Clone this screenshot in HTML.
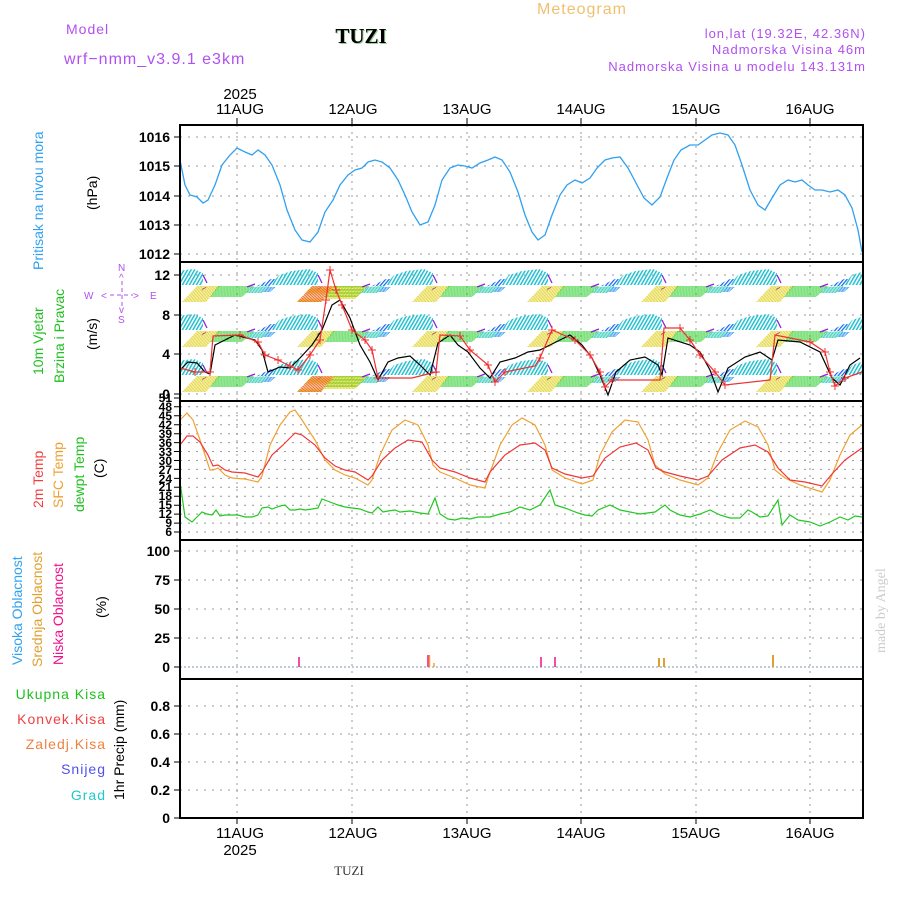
<!DOCTYPE html>
<html><head><meta charset="utf-8"><style>
html,body{margin:0;padding:0;background:#fff;width:900px;height:900px;overflow:hidden}
svg{display:block;font-family:"Liberation Sans",sans-serif}
</style></head><body>
<svg width="900" height="900" viewBox="0 0 900 900" xmlns="http://www.w3.org/2000/svg" xmlns:xlink="http://www.w3.org/1999/xlink">
<defs>
<pattern id="sy" width="3" height="3" patternUnits="userSpaceOnUse" patternTransform="skewX(-65)"><rect width="1.7" height="3" fill="#e0d020"/></pattern>
<pattern id="so" width="3" height="3" patternUnits="userSpaceOnUse" patternTransform="skewX(-62)"><rect width="1.7" height="3" fill="#f06030"/></pattern>
<pattern id="sg" width="3" height="3" patternUnits="userSpaceOnUse" patternTransform="skewX(-72)"><rect width="1.7" height="3" fill="#30d030"/></pattern>
<pattern id="sc" width="3" height="3" patternUnits="userSpaceOnUse" patternTransform="skewX(-75)"><rect width="1.7" height="3" fill="#20c8b0"/></pattern>
<pattern id="sb" width="3" height="3" patternUnits="userSpaceOnUse" patternTransform="skewX(-75)"><rect width="1.7" height="3" fill="#2090f0"/></pattern>
<pattern id="nc" width="3.5" height="3" patternUnits="userSpaceOnUse" patternTransform="skewX(-30)"><rect width="1.7" height="3" fill="#20c0d0"/></pattern>
<pattern id="nb" width="3.5" height="3" patternUnits="userSpaceOnUse" patternTransform="skewX(-40)"><rect width="1.7" height="3" fill="#2070f0"/></pattern>
<g id="day">
<polygon points="34,0 42,-10 55,-14 72,-16 81,-12 81,0" fill="url(#nc)"/>
<polygon points="20,1 34,-6 38,-6 34,1" fill="url(#nb)"/>
<path d="M10 2l8-3M81 -10l4 8M84 2l-4 3" stroke="#9020e0" stroke-width="1.3" fill="none"/>
<polygon points="75,1 98,1 84,17 60,17" fill="url(#sy)"/>
<polygon points="96,1 132,1 120,12 88,12" fill="url(#sg)"/>
<polygon points="130,2 148,1 140,8 124,8" fill="url(#sc)"/>
<polygon points="146,2 154,2 148,7 140,7" fill="url(#sb)"/>
</g>
<g id="dayR">
<polygon points="75,1 98,1 84,17 60,17" fill="url(#so)"/>
<polygon points="96,1 130,1 118,14 86,14" fill="url(#sy)"/>
</g>
<clipPath id="wc"><rect x="181" y="263" width="681" height="137"/></clipPath>
</defs>
<rect width="900" height="900" fill="#fff"/>
<text x="582" y="14" font-size="16" fill="#f0c070" text-anchor="middle" letter-spacing="1">Meteogram</text>
<text x="66" y="34" font-size="14" fill="#b050f0" letter-spacing="1">Model</text>
<text x="64" y="64" font-size="16" fill="#b050f0" letter-spacing="1">wrf−nmm_v3.9.1  e3km</text>
<text x="362" y="44" font-size="21" font-weight="bold" font-family="Liberation Serif,serif" fill="#9c9" text-anchor="middle">TUZI</text>
<text x="361" y="43" font-size="21" font-weight="bold" font-family="Liberation Serif,serif" fill="#000" text-anchor="middle">TUZI</text>
<text x="866" y="38" font-size="13" fill="#b050f0" text-anchor="end" letter-spacing="1">lon,lat (19.32E, 42.36N)</text>
<text x="866" y="54" font-size="13" fill="#b050f0" text-anchor="end" letter-spacing="1">Nadmorska Visina 46m</text>
<text x="866" y="71" font-size="13" fill="#b050f0" text-anchor="end" letter-spacing="1">Nadmorska Visina u modelu 143.131m</text>
<g font-size="15" fill="#000" text-anchor="middle">
<text x="240" y="99">2025</text>
<text x="240" y="114">11AUG</text><text x="353" y="114">12AUG</text><text x="467" y="114">13AUG</text><text x="581" y="114">14AUG</text><text x="696" y="114">15AUG</text><text x="810" y="114">16AUG</text>
<text x="240" y="838">11AUG</text><text x="353" y="838">12AUG</text><text x="467" y="838">13AUG</text><text x="581" y="838">14AUG</text><text x="696" y="838">15AUG</text><text x="810" y="838">16AUG</text>
<text x="240" y="855">2025</text>
</g>
<text x="349" y="875" font-size="13" font-family="Liberation Serif,serif" fill="#333" text-anchor="middle">TUZI</text>
<g stroke="#999" stroke-dasharray="2,5" stroke-width="1">
<line x1="237" y1="125" x2="237" y2="818"/><line x1="352" y1="125" x2="352" y2="818"/><line x1="467" y1="125" x2="467" y2="818"/><line x1="581" y1="125" x2="581" y2="818"/><line x1="696" y1="125" x2="696" y2="818"/><line x1="810" y1="125" x2="810" y2="818"/>
</g>
<g stroke="#999" stroke-dasharray="2,6" stroke-width="1">
<line x1="180" y1="137" x2="863" y2="137"/><line x1="180" y1="166" x2="863" y2="166"/><line x1="180" y1="196" x2="863" y2="196"/><line x1="180" y1="225" x2="863" y2="225"/><line x1="180" y1="254" x2="863" y2="254"/>
<line x1="180" y1="275" x2="863" y2="275"/><line x1="180" y1="315" x2="863" y2="315"/><line x1="180" y1="354" x2="863" y2="354"/><line x1="180" y1="394" x2="863" y2="394"/>
<line x1="180" y1="406.8" x2="863" y2="406.8"/><line x1="180" y1="415.8" x2="863" y2="415.8"/><line x1="180" y1="424.7" x2="863" y2="424.7"/><line x1="180" y1="433.7" x2="863" y2="433.7"/><line x1="180" y1="442.6" x2="863" y2="442.6"/><line x1="180" y1="451.5" x2="863" y2="451.5"/><line x1="180" y1="460.5" x2="863" y2="460.5"/><line x1="180" y1="469.4" x2="863" y2="469.4"/><line x1="180" y1="478.4" x2="863" y2="478.4"/><line x1="180" y1="487.3" x2="863" y2="487.3"/><line x1="180" y1="496.2" x2="863" y2="496.2"/><line x1="180" y1="505.2" x2="863" y2="505.2"/><line x1="180" y1="514.1" x2="863" y2="514.1"/><line x1="180" y1="523.1" x2="863" y2="523.1"/><line x1="180" y1="532" x2="863" y2="532"/>
<line x1="180" y1="551" x2="863" y2="551"/><line x1="180" y1="580" x2="863" y2="580"/><line x1="180" y1="609" x2="863" y2="609"/><line x1="180" y1="638" x2="863" y2="638"/>
<line x1="180" y1="706" x2="863" y2="706"/><line x1="180" y1="734" x2="863" y2="734"/><line x1="180" y1="762" x2="863" y2="762"/><line x1="180" y1="790" x2="863" y2="790"/>
</g>
<g stroke="#000" stroke-width="1">
<path d="M174 137h6M174 166h6M174 196h6M174 225h6M174 254h6M174 275h6M174 315h6M174 354h6M174 394h6M174 551h6M174 580h6M174 609h6M174 638h6M174 667h6M174 706h6M174 734h6M174 762h6M174 790h6M174 818h6M174 398h6M174 406.8h6M174 415.8h6M174 424.7h6M174 433.7h6M174 442.6h6M174 451.5h6M174 460.5h6M174 469.4h6M174 478.4h6M174 487.3h6M174 496.2h6M174 505.2h6M174 514.1h6M174 523.1h6M174 532h6"/>
<path d="M237 118v7M352 118v7M467 118v7M581 118v7M696 118v7M810 118v7M237 818v6M352 818v6M467 818v6M581 818v6M696 818v6M810 818v6"/>
</g>
<g font-size="14" fill="#000" text-anchor="end" font-weight="bold">
<text x="170" y="142">1016</text><text x="170" y="171">1015</text><text x="170" y="201">1014</text><text x="170" y="230">1013</text><text x="170" y="259">1012</text>
<text x="170" y="280">12</text><text x="170" y="320">8</text><text x="170" y="359">4</text><text x="170" y="399">0</text>
<text x="170" y="556">100</text><text x="170" y="585">75</text><text x="170" y="614">50</text><text x="170" y="643">25</text><text x="170" y="672">0</text>
<text x="170" y="711">0.8</text><text x="170" y="739">0.6</text><text x="170" y="767">0.4</text><text x="170" y="795">0.2</text><text x="170" y="823">0</text>
</g>
<g font-size="12" fill="#000" text-anchor="end" font-weight="bold">
<text x="172" y="402">51</text><text x="172" y="411">48</text><text x="172" y="420">45</text><text x="172" y="429">42</text><text x="172" y="438">39</text><text x="172" y="447">36</text><text x="172" y="456">33</text><text x="172" y="465">30</text><text x="172" y="474">27</text><text x="172" y="483">24</text><text x="172" y="491">21</text><text x="172" y="500">18</text><text x="172" y="509">15</text><text x="172" y="518">12</text><text x="172" y="527">9</text><text x="172" y="536">6</text>
</g>
<g font-size="14">
<text transform="translate(43,270) rotate(-90)" fill="#30a0f0">Pritisak na nivou mora</text>
<text transform="translate(97,210) rotate(-90)" fill="#000">(hPa)</text>
<text transform="translate(43,375) rotate(-90)" fill="#20c020">10m Vjetar</text>
<text transform="translate(64,383) rotate(-90)" fill="#20c020">Brzina i Pravac</text>
<text transform="translate(97,350) rotate(-90)" fill="#000">(m/s)</text>
<text transform="translate(43,508) rotate(-90)" fill="#f04040">2m Temp</text>
<text transform="translate(63,508) rotate(-90)" fill="#f0a030">SFC Temp</text>
<text transform="translate(84,512) rotate(-90)" fill="#20c020">dewpt Temp</text>
<text transform="translate(104,478) rotate(-90)" fill="#000">(C)</text>
<text transform="translate(22,665) rotate(-90)" fill="#30a0f0">Visoka Oblacnost</text>
<text transform="translate(42,667) rotate(-90)" fill="#e0a030">Srednja Oblacnost</text>
<text transform="translate(63,665) rotate(-90)" fill="#f0108a">Niska Oblacnost</text>
<text transform="translate(106,618) rotate(-90)" fill="#000">(%)</text>
<text transform="translate(124,800) rotate(-90)" fill="#000">1hr Precip (mm)</text>
<text transform="translate(885,653) rotate(-90)" fill="#ccc" font-family="Liberation Serif,serif">made by Angel</text>
</g>
<g font-size="14" text-anchor="end" letter-spacing="1">
<text x="106" y="699" fill="#20c020">Ukupna  Kisa</text>
<text x="106" y="724" fill="#f04040">Konvek.Kisa</text>
<text x="106" y="749" fill="#f08040">Zaledj.Kisa</text>
<text x="106" y="774" fill="#5050f0">Snijeg</text>
<text x="106" y="800" fill="#20c8c8">Grad</text>
</g>
<g font-size="10" fill="#b050f0">
<text x="118" y="271">N</text><text x="118" y="323">S</text><text x="84" y="299">W</text><text x="150" y="299">E</text>
<text x="101" y="299">&lt;</text><text x="133" y="299">&gt;</text>
<text x="119" y="281">^</text><text x="119" y="313">v</text>
<line x1="110" y1="295" x2="133" y2="295" stroke="#b050f0" stroke-dasharray="4,3"/>
<line x1="122" y1="281" x2="122" y2="309" stroke="#b050f0" stroke-dasharray="4,3"/>
</g>
<polyline fill="none" stroke="#30a0f0" stroke-width="1.3" points="180,160 185,185 190,195 197,197 203,203 208,200 215,185 222,165 230,155 237,148 245,152 252,155 258,150 265,155 272,165 280,185 287,210 295,230 302,240 310,242 318,232 325,212 333,200 340,185 348,175 355,170 362,168 368,162 375,160 382,162 390,168 398,180 405,195 412,212 420,225 428,222 435,205 442,180 450,168 458,165 465,166 472,168 480,163 488,160 495,157 502,160 510,172 518,192 525,215 532,232 538,240 545,235 552,215 560,195 567,185 575,180 582,183 590,178 597,168 605,160 612,158 620,157 628,168 636,183 644,198 652,205 660,197 667,178 674,160 681,150 690,145 698,145 705,140 712,135 720,133 728,135 735,145 742,165 750,190 758,205 765,210 772,198 780,185 788,180 795,182 802,180 808,185 815,190 822,190 830,192 838,190 845,195 852,208 858,230 862,252"/>
<g clip-path="url(#wc)">
<use xlink:href="#day" href="#day" x="122" y="285"/><use xlink:href="#day" href="#day" x="122" y="330"/><use xlink:href="#day" href="#day" x="122" y="375"/>
<use xlink:href="#day" href="#day" x="237" y="285"/><use xlink:href="#day" href="#day" x="237" y="330"/><use xlink:href="#day" href="#day" x="237" y="375"/>
<use xlink:href="#dayR" href="#dayR" x="237" y="285"/><use xlink:href="#dayR" href="#dayR" x="237" y="375"/>
<use xlink:href="#day" href="#day" x="352" y="285"/><use xlink:href="#day" href="#day" x="352" y="330"/><use xlink:href="#day" href="#day" x="352" y="375"/>
<use xlink:href="#day" href="#day" x="467" y="285"/><use xlink:href="#day" href="#day" x="467" y="330"/><use xlink:href="#day" href="#day" x="467" y="375"/>
<use xlink:href="#day" href="#day" x="581" y="285"/><use xlink:href="#day" href="#day" x="581" y="330"/><use xlink:href="#day" href="#day" x="581" y="375"/>
<use xlink:href="#day" href="#day" x="696" y="285"/><use xlink:href="#day" href="#day" x="696" y="330"/><use xlink:href="#day" href="#day" x="696" y="375"/>
<use xlink:href="#day" href="#day" x="810" y="285"/><use xlink:href="#day" href="#day" x="810" y="330"/><use xlink:href="#day" href="#day" x="810" y="375"/>
</g>
<polyline fill="none" stroke="#000" stroke-width="1.2" points="180,370 188,362 197,363 205,372 210,374 215,345 235,335 255,340 262,350 268,372 280,367 290,368 300,358 312,345 322,330 332,305 340,300 350,318 360,345 370,362 378,380 388,362 398,358 410,356 420,365 430,375 438,343 450,335 458,345 468,352 480,368 490,378 500,362 515,358 528,352 540,350 550,345 560,340 570,335 582,345 592,358 600,375 608,395 616,372 630,360 645,357 658,365 662,375 668,338 690,345 700,352 710,370 718,392 728,368 745,357 760,352 772,360 778,340 800,342 820,352 832,378 840,385 850,365 860,358"/>
<polyline fill="none" stroke="#f03030" stroke-width="1.2" points="180,368 195,372 210,372 213,336 240,335 258,342 265,355 278,360 290,366 298,370 310,355 320,340 326,300 330,270 336,290 342,305 352,330 365,340 372,350 378,378 412,378 436,372 440,335 460,336 470,350 488,365 495,382 505,372 535,366 540,358 552,330 575,340 590,355 600,372 605,387 612,380 660,380 664,328 680,328 690,340 700,355 715,372 725,385 770,380 775,335 810,342 825,352 830,372 835,386 845,378 862,372"/>
<path stroke="#f03030" stroke-width="1" fill="none" d="M191 372h8M195 368v8M206 372h8M210 368v8M236 335h8M240 331v8M254 342h8M258 338v8M261 355h8M265 351v8M274 360h8M278 356v8M286 366h8M290 362v8M294 370h8M298 366v8M306 355h8M310 351v8M316 340h8M320 336v8M322 300h8M326 296v8M326 270h8M330 266v8M332 290h8M336 286v8M338 305h8M342 301v8M348 330h8M352 326v8M361 340h8M365 336v8M368 350h8M372 346v8M374 378h8M378 374v8M432 372h8M436 368v8M456 336h8M460 332v8M466 350h8M470 346v8M484 365h8M488 361v8M491 382h8M495 378v8M501 372h8M505 368v8M536 358h8M540 354v8M548 330h8M552 326v8M571 340h8M575 336v8M586 355h8M590 351v8M596 372h8M600 368v8M601 387h8M605 383v8M608 380h8M612 376v8M676 328h8M680 324v8M686 340h8M690 336v8M696 355h8M700 351v8M711 372h8M715 368v8M721 385h8M725 381v8M806 342h8M810 338v8M821 352h8M825 348v8M826 372h8M830 368v8M831 386h8M835 382v8M841 378h8M845 374v8"/>
<polyline fill="none" stroke="#f0a030" stroke-width="1.2" points="180,420 187,413 193,420 200,440 205,455 210,470 213,470 218,468 225,475 232,478 245,479 258,482 262,476 270,445 280,425 290,412 295,410 302,420 315,440 325,460 335,470 345,475 355,478 368,485 372,480 380,455 392,430 405,420 418,425 428,445 433,465 440,472 455,478 470,485 485,488 488,478 500,445 512,425 522,418 535,425 545,445 552,470 565,478 582,484 593,480 600,455 612,432 625,420 638,422 648,440 655,465 665,474 680,480 698,485 708,478 718,452 730,430 745,421 758,427 768,445 775,470 785,478 800,485 822,492 830,480 840,455 850,435 862,425"/>
<polyline fill="none" stroke="#f03838" stroke-width="1.2" points="180,445 187,436 193,436 200,442 208,455 213,466 218,465 225,470 232,472 245,473 258,477 262,472 272,455 283,445 295,433 302,435 315,445 325,458 335,466 345,470 355,472 368,480 372,476 382,460 395,448 408,440 422,442 432,460 440,468 455,472 470,478 485,482 490,472 505,455 520,445 535,443 545,450 552,468 565,474 582,478 593,476 605,458 620,447 636,443 648,450 656,468 665,472 680,476 698,480 708,476 722,460 740,448 755,445 768,452 778,468 790,480 805,482 822,486 832,474 845,460 862,448"/>
<polyline fill="none" stroke="#20c820" stroke-width="1.2" points="180,482 185,517 192,522 197,517 202,512 207,514 212,515 216,510 220,516 225,515 230,515 238,515 245,517 252,517 258,515 262,508 268,507 272,509 280,506 285,505 290,510 295,510 300,509 305,510 312,509 318,508 322,499 330,502 338,505 345,507 352,508 360,509 368,512 372,513 378,507 383,512 388,511 395,510 400,512 410,511 420,513 428,514 435,498 440,514 448,519 455,520 462,518 470,519 478,517 490,517 500,514 510,512 520,507 530,510 540,505 550,490 555,505 565,508 578,513 585,515 592,516 598,510 610,505 620,510 630,512 640,514 655,512 665,505 670,510 680,515 690,517 700,514 710,510 720,515 730,518 740,518 748,510 752,512 760,517 768,516 778,500 782,525 790,515 798,520 810,522 820,526 830,522 840,517 848,520 855,516 862,517"/>
<line x1="180" y1="667" x2="863" y2="667" stroke="#a8b8d0" stroke-width="1.5" stroke-dasharray="2,2"/>
<g stroke-width="1.5">
<line x1="299" y1="667" x2="299" y2="657" stroke="#f0108a"/>
<line x1="428" y1="667" x2="428" y2="655" stroke="#f0108a"/><line x1="429.5" y1="667" x2="429.5" y2="655" stroke="#f0a030"/>
<line x1="434" y1="667" x2="434" y2="663" stroke="#f0a030"/>
<line x1="541" y1="667" x2="541" y2="657" stroke="#f0108a"/><line x1="555" y1="667" x2="555" y2="657" stroke="#f0108a"/>
<line x1="659" y1="667" x2="659" y2="658" stroke="#e0a030" stroke-width="2"/><line x1="664" y1="667" x2="664" y2="658" stroke="#e0a030" stroke-width="2"/>
<line x1="773" y1="667" x2="773" y2="655" stroke="#e0a030" stroke-width="2"/>
</g>
<g fill="none" stroke="#000" stroke-width="2">
<rect x="180" y="125" width="683" height="693"/>
<line x1="180" y1="262" x2="863" y2="262"/><line x1="180" y1="401" x2="863" y2="401"/><line x1="180" y1="540" x2="863" y2="540"/><line x1="180" y1="679" x2="863" y2="679"/>
</g>
</svg>
</body></html>
